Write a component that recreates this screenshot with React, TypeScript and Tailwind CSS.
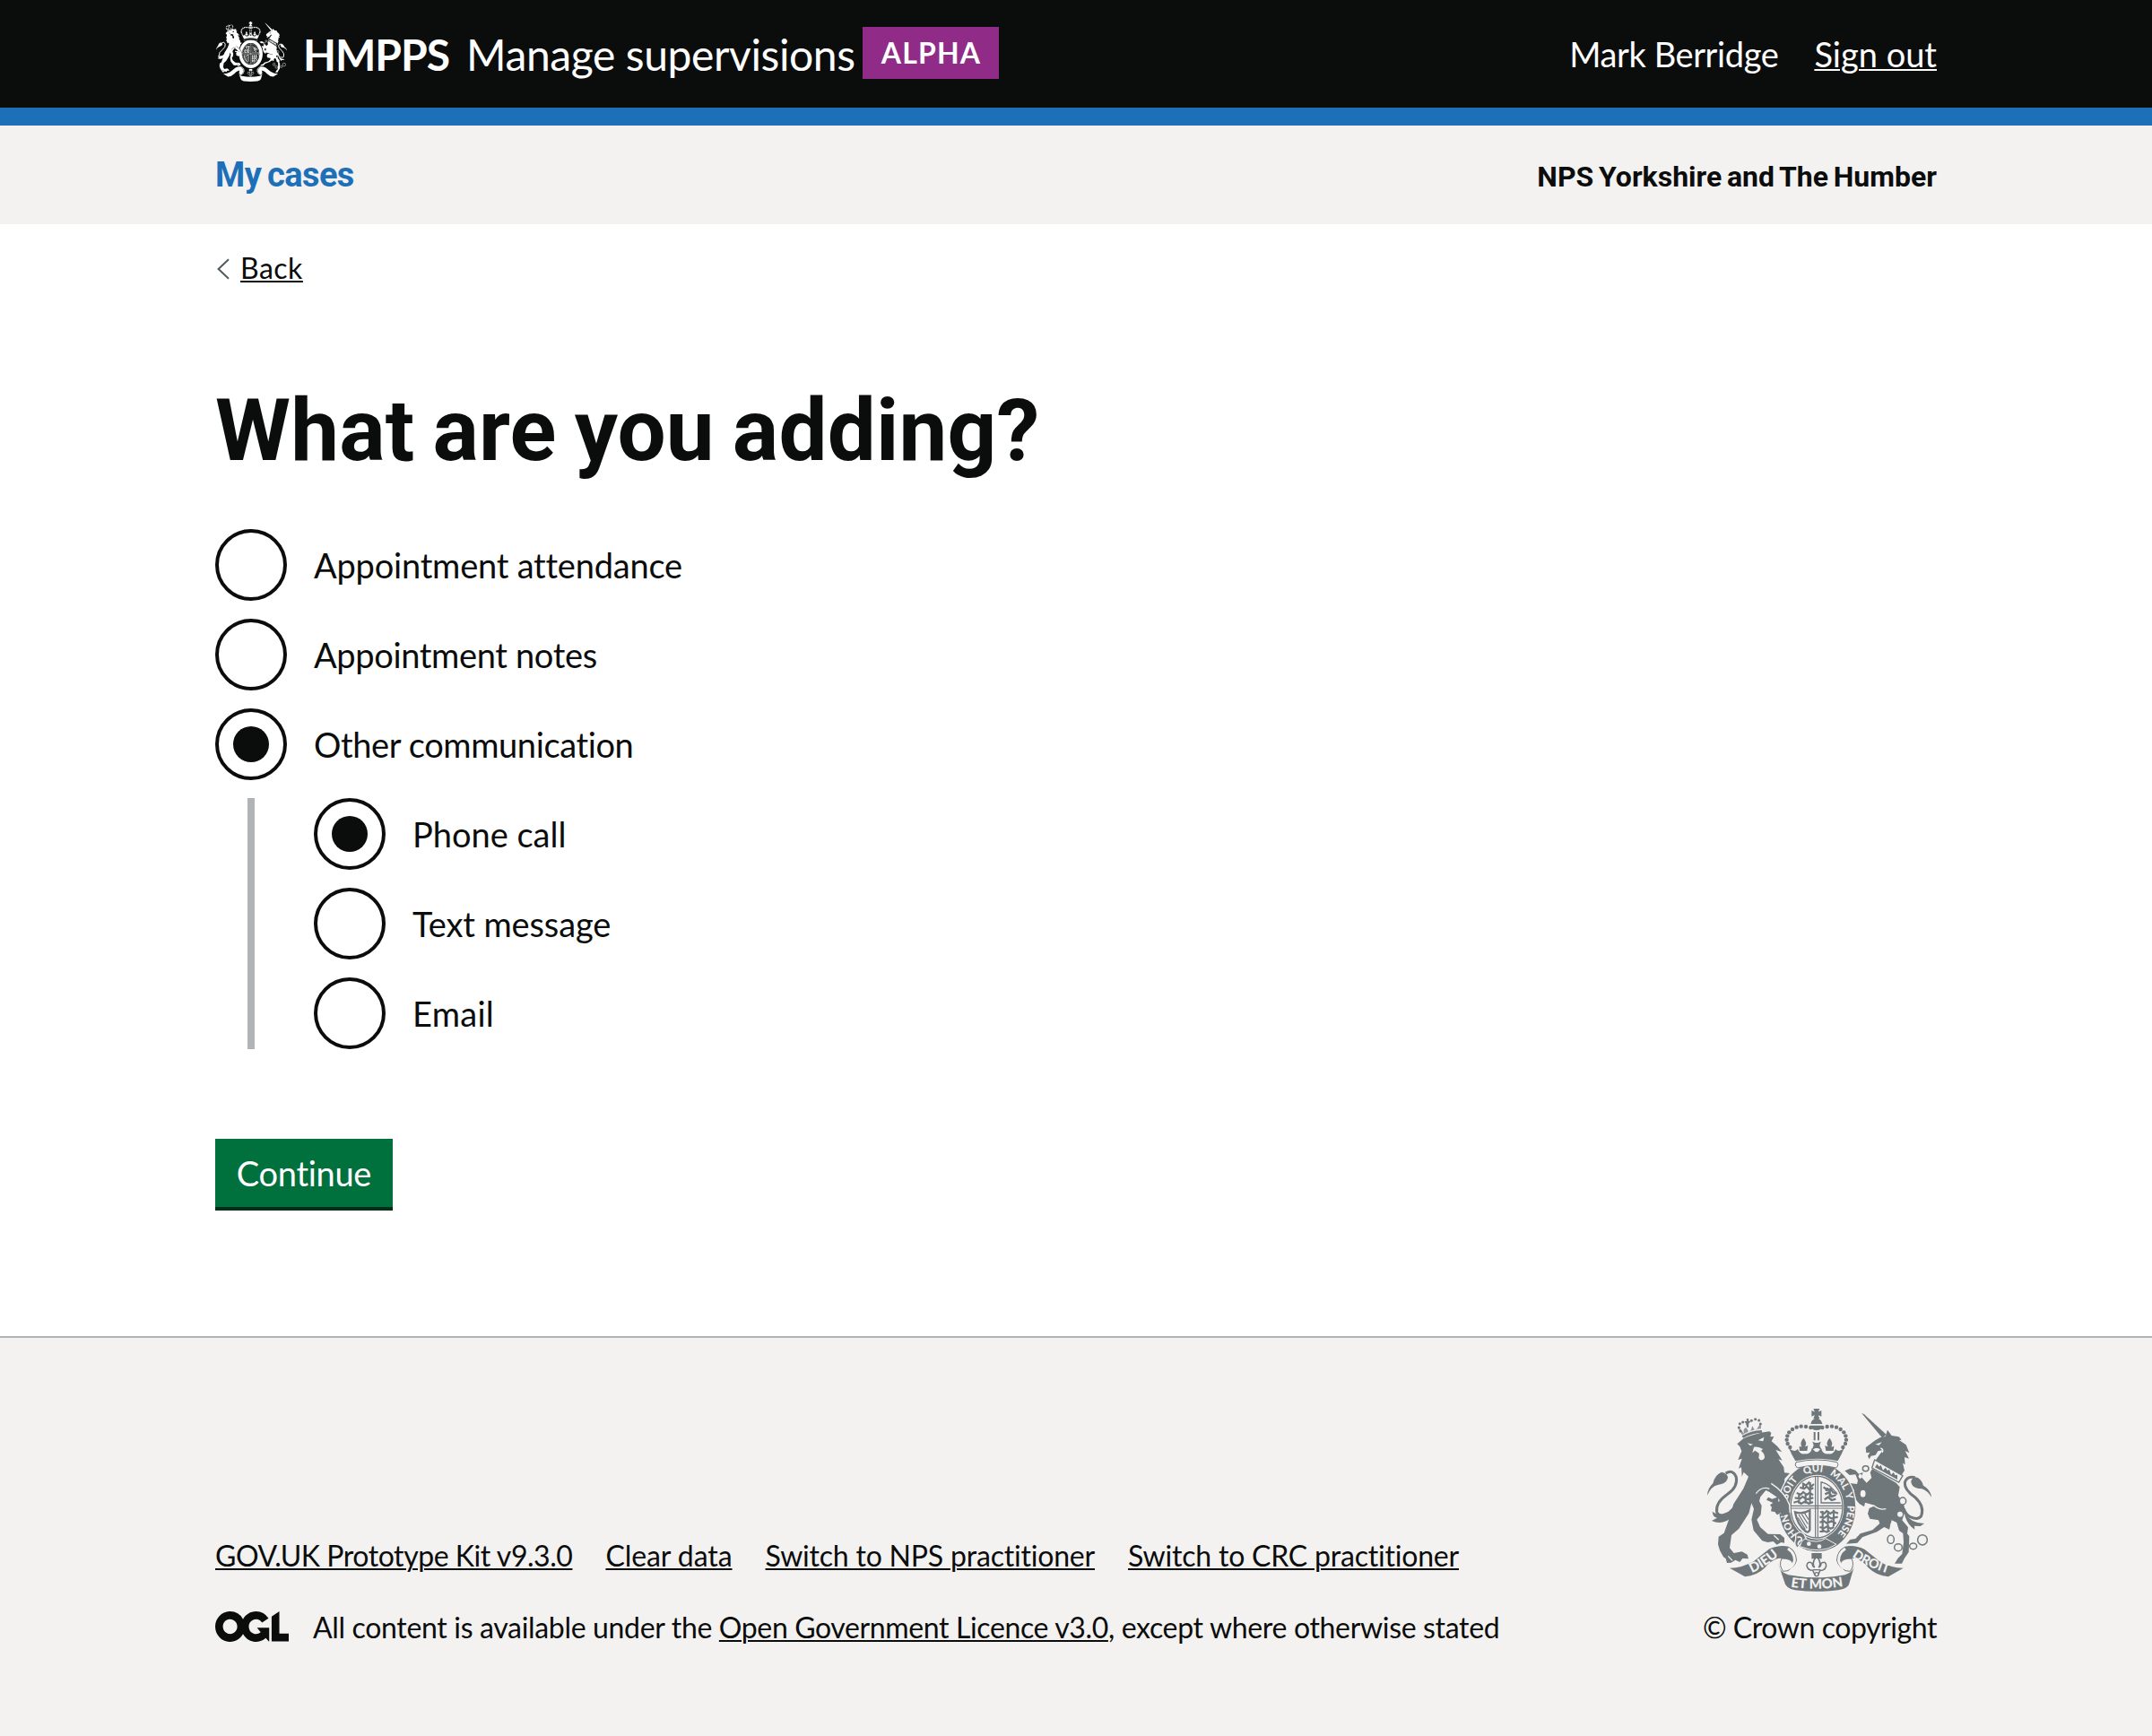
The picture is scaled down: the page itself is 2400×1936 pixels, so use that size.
import type { ReactNode } from "react";

type CrestProps = {
  className: string;
  fg: string;
  bg: string;
  lettering?: boolean;
};

/* Motto on the garter: word, start and end angle in degrees clockwise from the top. */
const MOTTO: [string, number, number][] = [
  ["HONI", -150, -86],
  ["SOIT", -90, -26],
  ["QUI", -38, 24],
  ["MAL", 12, 72],
  ["Y", 52, 92],
  ["PENSE", 74, 152],
];

function garterArc(from: number, to: number) {
  const point = (deg: number) => {
    const t = (deg * Math.PI) / 180;
    return `${(410 + 101 * Math.sin(t)).toFixed(1)} ${(366 - 119 * Math.cos(t)).toFixed(1)}`;
  };
  return `M${point(from)} A101 119 0 0 1 ${point(to)}`;
}

/* Royal coat of arms. `lettering` adds the mottoes on the garter and the scroll. */
function Crest({ className, fg, bg, lettering = false }: CrestProps) {
  const pearls = [
    [388, 99], [372, 96], [356, 95], [341, 98], [327, 105], [316, 115],
    [310, 127], [308, 140], [311, 153], [319, 165],
  ];
  const rings = [
    [572, 236, 10, 9], [563, 320, 11, 14], [696, 345, 11, 12], [656, 473, 11, 14],
    [681, 500, 13, 12], [731, 496, 12, 10], [762, 475, 16, 17],
  ];
  return (
    <svg className={className} viewBox="42 36 750 612" preserveAspectRatio="none" aria-hidden="true">
      <defs>
        {MOTTO.map(([word, from, to]) => (
          <path key={word} id={`garter-${word}`} d={garterArc(from, to)} />
        ))}
        <path id="scroll-left" d="M172 592 Q230 575 296 514" />
        <path id="scroll-mid" d="M300 628 Q408 650 518 626" />
        <path id="scroll-right" d="M512 520 Q572 568 664 592" />
      </defs>

      {/* Imperial crown */}
      <g fill={fg}>
        <path d="M397 36 H418 L411 52 L418 69 H397 L404 52 Z M391 42 L407 49 L424 42 V62 L407 55 L391 62 Z" />
        <path d="M403 62 H412 L414 70 Q424 74 427 87 H388 Q391 74 401 70 Z" />
        <path d="M389 92 H426 Q426 108 408 108 Q390 108 389 92 Z" />
        {pearls.map(([x, y]) => (
          <g key={`${x}-${y}`}>
            <circle cx={x} cy={y} r="6.6" />
            <circle cx={815 - x} cy={y} r="6.6" />
          </g>
        ))}
        <path d="M398 114 H404 V142 H398 Z M411 114 H417 V142 H411 Z" />
        <path d="M315 168 Q333 184 345 171 Q351 190 369 187 Q389 189 392 168 L400 176 Q408 186 416 176 L423 168 Q427 189 447 187 Q465 190 471 171 Q482 184 500 168 Q491 190 479 211 Q408 196 337 211 Q324 190 315 168 Z" />
        <path d="M364 134 Q378 150 369 163 L379 160 L376 177 H351 L350 161 L358 164 Q350 150 364 134 Z" />
        <path d="M451 134 Q465 150 457 164 L466 161 L464 177 H439 L436 160 L446 163 Q437 150 451 134 Z" />
        <path d="M394 146 L403 150 H413 L422 146 L418 159 L424 173 L412 168 H404 L392 173 L398 159 Z" />
      </g>

      {/* Lion */}
      <g fill={fg}>
        <path d="M158 127 Q189 109 224 108 L226 116 Q193 117 162 134 Z" />
        <path d="M145 101 L154 104 L164 119 L164 106 L171 98 L178 107 L179 114 L188 108 L193 94 L200 106 L207 106 L215 92 L221 84 L222 103 Q188 106 159 124 Z" opacity=".75" />
        <path d="M171 85 L166 79 L174 77 L173 69 L181 70 L180 76 L187 80 L181 85 L180 99 L175 98 Z" />
        {[[148, 99], [151, 86], [161, 81], [190, 76], [203, 71], [215, 75], [220, 87], [153, 111]].map(([x, y]) => (
          <circle key={`${x}-${y}`} cx={x} cy={y} r="4.6" />
        ))}
        <path d="M142 154 L163 136 Q200 119 250 112 L256 117 L253 130 L265 129 L257 145 L276 161 L292 181 L271 174 L293 209 L280 205 L298 232 L300 250 L318 252 L301 270 L299 290 L288 309 L302 335 L312 361 L315 388 L303 387 L296 398 L287 384 L276 391 L268 380 L256 379 L258 366 L252 358 L262 351 L240 341 L246 332 L259 338 L276 332 L251 315 L238 309 L220 331 L216 345 L224 361 L221 391 L208 407 L219 432 L245 455 L286 456 L300 468 L300 485 L289 483 L275 491 L263 480 L244 483 L226 478 L197 443 L190 407 L198 371 L190 352 L181 386 L148 437 L123 459 L117 502 L131 519 L158 514 L176 524 L180 538 L160 537 L151 549 L136 542 L122 551 L108 552 L104 538 L96 532 L84 510 L78 490 L80 464 L98 452 L113 410 L130 355 L163 303 L180 263 L164 248 L158 263 L156 232 L147 236 L158 203 L145 207 L157 178 L151 163 Z" />
        <path d="M42 326 Q43 303 61 286 Q67 257 90 248 Q114 253 110 270 Q105 287 77 291 Q55 296 42 326 Z" />
        <path d="M91 389 Q72 391 59 380 Q61 399 75 401 L57 411 Q78 421 99 414 Q120 408 129 387 L134 372 Z" />
      </g>
      <path d="M104 252 Q128 237 139 265 Q145 298 110 322 Q69 350 74 382 Q80 400 111 388 L134 366" fill="none" stroke={fg} strokeWidth="9" />
      <path d="M176 151 L195 155 L186 160 Z M212 142 L232 131 L229 145 Z M198 164 Q214 161 228 171 L222 177 Q239 190 232 204 Q220 214 214 201 L216 186 L202 176 L193 184 Z" fill={bg} />
      <path d="M205 320 Q224 294 250 304 M112 529 L126 544 M265 460 L281 475" fill="none" stroke={bg} strokeWidth="4" />

      {/* Unicorn */}
      <g fill={fg}>
        <path d="M558 50 L567 55 L641 122 L628 134 Z" />
        <path d="M572 166 L604 142 L621 132 L638 129 L645 107 L659 126 L683 130 L692 140 L684 141 L707 157 L718 184 L704 177 L717 203 L702 198 L704 223 L696 218 L702 242 L692 259 L602 213 L630 174 L613 178 L605 191 L590 194 L584 205 L579 194 L586 182 L574 184 Z" />
        <path d="M594 237 L674 284 L686 298 L681 327 L698 352 L705 377 L694 409 L714 433 L711 454 L718 463 L716 516 L702 536 L693 554 L669 554 L680 536 L694 522 L699 482 L697 453 L684 444 L676 417 L659 409 L651 440 L634 432 L610 448 L561 466 L544 485 L507 488 L520 474 L538 471 L554 454 L595 442 L619 420 L615 409 L586 404 L579 387 L584 369 L605 360 L570 350 L567 364 L551 354 L543 345 L529 321 L534 308 L524 303 L511 312 L502 296 L519 285 L543 288 L546 276 L538 256 L518 258 L502 244 L520 236 L538 242 L549 254 L563 249 L558 265 L575 284 L592 267 L587 250 Z" />
        <path d="M792 332 Q790 307 765 293 Q757 267 738 265 Q717 273 727 290 Q734 303 760 304 Q780 311 792 332 Z" />
        <path d="M700 374 Q714 410 745 417 L768 420 L755 429 L735 428 L736 440 Q714 427 704 397 Z" />
      </g>
      <path d="M737 266 Q710 260 703 283 Q701 307 737 332 Q770 363 758 395 Q748 410 721 398 Q706 390 700 371" fill="none" stroke={fg} strokeWidth="9" />
      <path d="M602 207 L696 260 L683 282 L593 234 Z" fill={bg} stroke={fg} strokeWidth="4" />
      <path d="M603 232 L610 221 L617 230 L623 224 L630 242 L638 233 L645 243 L651 239 L657 257 L665 249 L671 259 L678 257 L678 273 Z" fill={fg} />
      <path d="M604 155 L626 148 L617 158 Z" fill={bg} />
      <path d="M622 168 Q634 172 627 183 M600 361 Q619 376 640 371" fill="none" stroke={bg} strokeWidth="4" />
      {rings.map(([x, y, rx, ry]) => (
        <ellipse key={`${x}-${y}`} cx={x} cy={y} rx={rx} ry={ry} fill={bg} stroke={fg} strokeWidth="4.5" />
      ))}
      <ellipse cx="687" cy="389" rx="9" ry="9" fill={bg} />
      <ellipse cx="664" cy="425" rx="9" ry="9" fill={bg} />
      <ellipse cx="554" cy="262" rx="6" ry="8" fill={bg} />

      {/* Garter and shield */}
      <ellipse cx="410" cy="366" rx="132" ry="152" fill={bg} />
      <ellipse cx="410" cy="366" rx="128" ry="148" fill={lettering ? fg : bg} />
      {!lettering && <ellipse cx="410" cy="366" rx="108" ry="128" fill="none" stroke={fg} strokeWidth="34" />}
      <path d="M339 215 Q408 199 476 215 Q484 224 473 234 Q408 218 343 234 Q332 225 339 215 Z" fill={bg} stroke={fg} strokeWidth="3" />
      <ellipse cx="408" cy="365" rx="91" ry="108" fill={bg} />
      <ellipse cx="408" cy="365" rx="87" ry="103" fill="none" stroke={fg} strokeWidth="4" />
      <path d="M404 262 V467 M412 262 V467 M321 361 H495 M321 369 H495" fill="none" stroke={fg} strokeWidth="3.5" />
      <g fill="none" stroke={fg} strokeWidth="6.5">
        <path d="M360 285 l12 8 l10 -10 l8 13 l9 -8 M352 299 l14 5 l9 -7 l10 10 l12 -6 M341 318 l14 5 l8 -8 l12 9 l10 -7 l11 8 M335 334 l18 3 l8 -7 l14 9 l22 -5 M331 350 l14 -4 l11 8 l14 -8 l12 8 l14 -6 M363 287 v18 M386 282 v70 M349 318 v35 M371 318 v35" />
        <path d="M420 381 l14 5 l8 -8 l12 9 l10 -7 l16 6 M418 398 l16 3 l9 -7 l14 9 l22 -5 M418 416 l14 -4 l11 8 l14 -8 l16 8 M418 432 l14 4 l11 -6 l12 7 l11 -5 M418 447 l12 -3 l12 5 l10 -5 M428 378 v72 M446 378 v66 M465 374 v56" />
        <path d="M423 280 V351 H488 M425 282 Q452 287 477 323" strokeWidth="4" />
        <path d="M431 298 l12 10 l12 -4 l8 12 l12 2 M436 322 l13 -6 l10 14 l14 -6 M434 340 l12 -8 l12 10 l14 -4 M452 306 v26 M444 300 l-4 12" strokeWidth="7" />
        <path d="M336 382 Q362 390 385 376 V442 Q380 452 372 447 Q343 425 336 382 Z" strokeWidth="7" />
        <path d="M348 390 L376 436 M358 389 L379 422 M368 386 L381 407 M345 400 L370 440" strokeWidth="3.5" />
      </g>
      {lettering && (
        <>
          <g fill={bg} fontFamily="Lato, sans-serif" fontWeight="900" fontSize="33" textAnchor="middle">
            {MOTTO.map(([word]) => (
              <text key={word}>
                <textPath href={`#garter-${word}`} startOffset="50%">{word}</textPath>
              </text>
            ))}
          </g>
          <path d="M338 457 Q352 441 366 456 L374 474 Q350 488 344 503 Q330 489 338 473 Z" fill={fg} stroke={bg} strokeWidth="4" />
          <path d="M343 466 Q360 463 358 476 Q345 480 346 492" fill="none" stroke={bg} strokeWidth="5" />
          <path d="M368 471 Q410 490 438 470 L474 490 Q420 525 352 497 Q355 480 368 471 Z" fill={fg} stroke={bg} strokeWidth="3" />
          <circle cx="382" cy="488" r="7" fill={bg} />
          <circle cx="417" cy="497" r="7" fill={bg} />
        </>
      )}
      {/* Lion's foreleg resting on the garter */}
      <path d="M256 288 Q300 318 312 352 L316 388 L303 388 L296 398 L287 384 L276 391 L268 380 L256 379 L258 366 L268 350 L286 345 L278 332 L250 314 Z" fill={fg} />
      <path d="M256 286 Q303 316 317 358 L319 384" fill="none" stroke={bg} strokeWidth="4" />

      {/* Scroll */}
      <g fill={fg}>
        <path d="M117 569 Q159 569 198 546 L248 506 Q282 490 314 497 Q341 512 342 543 Q337 566 310 576 Q324 553 306 542 Q290 533 276 538 Q252 546 235 568 Q207 596 168 598 Z" />
        <path d="M698 569 Q657 569 618 546 L568 506 Q534 490 502 497 Q475 512 474 543 Q479 566 506 576 Q492 553 510 542 Q526 533 540 538 Q564 546 581 568 Q609 596 648 598 Z" />
        <path d="M279 552 Q284 584 313 592 Q408 610 503 592 Q532 584 537 552 L516 624 Q510 638 480 643 Q408 652 336 643 Q304 638 299 612 Z" />
      </g>
      <path d="M291 537 Q280 560 296 580 L312 578 Q333 562 328 552 Q322 537 291 537 Z M525 537 Q536 560 520 580 L504 578 Q483 562 488 552 Q494 537 525 537 Z" fill={lettering ? bg : fg} stroke={fg} strokeWidth="3" />
      <path d="M312 504 Q336 520 334 545 Q330 562 314 570 M504 504 Q480 520 482 545 Q486 562 502 570" fill="none" stroke={bg} strokeWidth={lettering ? 9 : 4} />
      {lettering && (
        <g fill={bg} fontFamily="Lato, sans-serif" fontWeight="900" textAnchor="middle">
          <text fontSize="45"><textPath href="#scroll-left" startOffset="50%">DIEU</textPath></text>
          <text fontSize="45"><textPath href="#scroll-mid" startOffset="50%">ET MON</textPath></text>
          <text fontSize="43"><textPath href="#scroll-right" startOffset="50%">DROIT</textPath></text>
        </g>
      )}

      {/* Fleur-de-lis below the garter */}
      <path d="M391 519 H425 V538 H391 Z" fill={fg} />
      <path d="M408 530 Q426 550 415 567 Q424 562 423 553 Q439 544 440 561 Q437 577 420 577 L413 592 H402 L395 577 Q378 577 375 561 Q377 544 393 553 Q392 562 401 567 Q390 550 408 530 Z" fill={bg} stroke={fg} strokeWidth="4.5" />
      <circle cx="408" cy="590" r="6" fill={bg} stroke={fg} strokeWidth="4" />
      <path d="M396 575 H420" stroke={fg} strokeWidth="4" />
    </svg>
  );
}

function OglLogo() {
  return (
    <svg className="h-[34px] w-[82px] shrink-0" viewBox="0 0 483.2 195.7" fill="#0b0c0c" preserveAspectRatio="none" aria-label="OGL">
      <path d="M421.5 142.8V.1l-50.7 32.3v161.1h112.4v-50.7zm-122.3-9.6A47.12 47.12 0 0 1 221 97.8c0-26 21.1-47.1 47.1-47.1 16.7 0 31.4 8.7 39.7 21.8l42.7-27.2A97.63 97.63 0 0 0 268.1 0c-36.5 0-68.3 20.1-85.1 49.7A98 98 0 0 0 97.8 0C43.9 0 0 43.9 0 97.8s43.9 97.8 97.8 97.8c36.5 0 68.3-20.1 85.1-49.7a97.76 97.76 0 0 0 149.6 25.4l19.4 22.2h3v-87.8h-80l24.3 27.5zM97.8 145c-26 0-47.1-21.1-47.1-47.1s21.1-47.1 47.1-47.1 47.1 21.1 47.1 47.1S123.8 145 97.8 145" />
    </svg>
  );
}

function Link({ className = "", children }: { className?: string; children: ReactNode }) {
  return (
    <a href="#" className={`underline decoration-2 underline-offset-[2px] ${className}`}>
      {children}
    </a>
  );
}

function Radio({ label, checked = false, className = "" }: { label: string; checked?: boolean; className?: string }) {
  return (
    <div className="flex h-20 items-center gap-[30px]">
      <span className="flex size-20 shrink-0 items-center justify-center rounded-full border-4 border-[#0b0c0c]">
        {checked && <span className="size-10 rounded-full bg-[#0b0c0c]" />}
      </span>
      <span className={`text-[38px] leading-[50px] ${className}`}>{label}</span>
    </div>
  );
}

export default function App() {
  return (
    <div className="flex h-[1936px] w-[2400px] flex-col overflow-hidden bg-white font-[Lato,sans-serif] text-[#0b0c0c] [font-variant-ligatures:none]">
      <header className="h-[140px] border-b-20 border-[#1d70b8] bg-[#0b0c0c] text-white">
        <div className="mx-auto flex h-[118px] w-[1920px] items-center justify-between">
          <div className="flex items-center">
            <Crest className="mb-[3px] ml-px h-[67px] w-[79px]" fg="#ffffff" bg="#0b0c0c" />
            <span className="ml-[18px] w-[182px] pt-[3px] text-[48px] font-bold leading-[60px] tracking-[-1px]">HMPPS</span>
            <span className="w-[442px] whitespace-nowrap pt-[3px] text-[48px] leading-[60px] tracking-[-0.4px]">Manage supervisions</span>
            <span className="flex h-[58px] w-[152px] items-center justify-center bg-[#912b88] pb-px pl-px text-[32px] font-bold tracking-[1.2px]">
              ALPHA
            </span>
          </div>
          <div className="flex gap-10 pt-0.5 text-[38px] leading-[50px]">
            <span className="tracking-[-0.4px]">Mark Berridge</span>
            <Link>Sign out</Link>
          </div>
        </div>
      </header>

      <nav className="h-[110px] bg-[#f3f2f1] font-[Roboto,sans-serif]">
        <div className="mx-auto flex h-[108px] w-[1920px] items-center justify-between">
          <a href="#" className="pt-px text-[38px] font-bold leading-[50px] tracking-[-0.6px] text-[#1d70b8] [word-spacing:-2px]">My cases</a>
          <span className="pt-1.5 text-[32px] font-bold leading-10 [word-spacing:-2.2px]">NPS Yorkshire and The Humber</span>
        </div>
      </nav>

      <main className="mx-auto w-[1920px] grow">
        <div className="mt-[27px] flex h-10 items-center pt-1.5">
          <svg className="mr-3 h-6 w-4" viewBox="0 0 16 24" fill="none" stroke="#505a5f" strokeWidth="2">
            <path d="M15 1.3 L3.6 12 L15 22.7" />
          </svg>
          <Link className="-mt-0.5 text-[32px] leading-10 tracking-[0.5px]">Back</Link>
        </div>

        <h1 className="mt-[113px] font-[Roboto,sans-serif] text-[96px] font-bold leading-[100px] tracking-[0.2px] [word-spacing:-4px]">What are you adding?</h1>

        <form>
          <div className="mt-[60px] flex flex-col gap-5">
            <Radio label="Appointment attendance" className="tracking-[-0.2px]" />
            <Radio label="Appointment notes" className="tracking-[-0.34px]" />
            <Radio label="Other communication" className="tracking-[-0.38px]" checked />
            <div className="ml-9 flex flex-col gap-5 border-l-8 border-[#b1b4b6] pl-[66px]">
              <Radio label="Phone call" checked />
              <Radio label="Text message" className="tracking-[-0.1px]" />
              <Radio label="Email" className="tracking-[0.3px]" />
            </div>
          </div>
          <button
            type="button"
            className="mt-[100px] flex h-20 w-[198px] items-center justify-center border-b-4 border-[#002d18] bg-[#00703c] pb-px text-[38px] leading-[38px] tracking-[-0.3px] text-white"
          >
            Continue
          </button>
        </form>
      </main>

      <footer className="h-[446px] border-t-2 border-[#b1b4b6] bg-[#f3f2f1] text-[32px] leading-10">
        <div className="mx-auto flex h-[343px] w-[1920px] items-end justify-between">
          <div>
            <div className="flex gap-[37px]">
              <Link className="tracking-[-0.45px]">GOV.UK Prototype Kit v9.3.0</Link>
              <Link className="tracking-[-0.08px]">Clear data</Link>
              <Link className="tracking-[-0.2px]">Switch to NPS practitioner</Link>
              <Link className="tracking-[-0.2px]">Switch to CRC practitioner</Link>
            </div>
            <div className="mt-10 flex items-center gap-[27px]">
              <div className="pb-0.5"><OglLogo /></div>
              <span className="tracking-[-0.33px]">
                All content is available under the <Link className="tracking-[-0.37px]">Open Government Licence v3.0</Link>, except where otherwise stated
              </span>
            </div>
          </div>
          <div className="flex flex-col items-end">
            <Crest className="mb-5 mr-1.5 h-[204px] w-[250px]" fg="#6f777b" bg="#f3f2f1" lettering />
            <span className="tracking-[-0.43px]">© Crown copyright</span>
          </div>
        </div>
      </footer>
    </div>
  );
}
